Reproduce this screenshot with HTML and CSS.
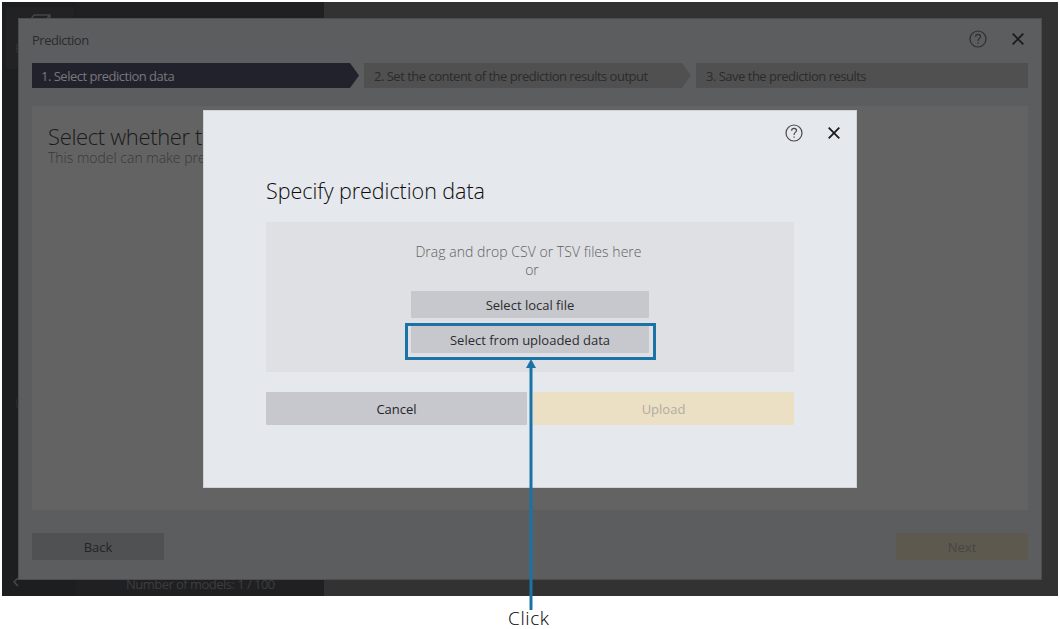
FILE: index.html
```html
<!DOCTYPE html>
<html lang="en">
<head>
<meta charset="utf-8">
<title>Prediction</title>
<link rel="stylesheet" href="styles.css">
</head>
<body>
<div class="figure">
  <div class="app">
    <aside class="rail">
      <div class="rail-item">
        <svg class="cube" width="28" height="24" viewBox="0 0 28 24"><path d="M1 9 7 1h16v14l-5 8H1zM1 9h15l7-8M16 9v14"/></svg>
        <span class="rail-label">P</span>
      </div>
      <span class="rail-user">U</span>
      <svg class="chevron" width="8" height="10" viewBox="0 0 8 10"><path d="M6 1 2 5l4 4"/></svg>
    </aside>
    <div class="models"><span class="model-count">Number of models: 1 / 100</span></div>
    <div class="workspace"></div>
  </div>

  <section class="wizard">
    <header class="wizard-head">
      <span class="wizard-title">Prediction</span>
      <div class="tools">
        <svg class="help" width="18" height="18" viewBox="0 0 18 18"><circle cx="9" cy="9" r="8"/><path d="M6.5 6.6C6.7 5 7.7 4.4 9 4.4c1.4 0 2.5.8 2.5 2.1 0 1.8-2.4 2-2.4 4v.5M9.1 12.4v1.4"/></svg>
        <svg class="close" width="12" height="12" viewBox="0 0 12 12"><path d="m.7.7 10.6 10.6M11.3.7.7 11.3"/></svg>
      </div>
    </header>
    <nav class="steps">
      <div class="step step-arrow active"><span>1. Select prediction data</span></div>
      <div class="step step-arrow"><span>2. Set the content of the prediction results output</span></div>
      <div class="step"><span>3. Save the prediction results</span></div>
    </nav>
    <div class="content">
      <div class="content-title">Select whether t</div>
      <div class="content-sub">This model can make pre</div>
    </div>
    <footer class="wizard-foot">
      <div class="btn back"><span>Back</span></div>
      <div class="btn next"><span>Next</span></div>
    </footer>
  </section>

  <section class="modal">
    <header class="tools modal-tools">
      <svg class="help" width="18" height="18" viewBox="0 0 18 18"><circle cx="9" cy="9" r="8"/><path d="M6.5 6.6C6.7 5 7.7 4.4 9 4.4c1.4 0 2.5.8 2.5 2.1 0 1.8-2.4 2-2.4 4v.5M9.1 12.4v1.4"/></svg>
      <svg class="close" width="12" height="12" viewBox="0 0 12 12"><path d="m.7.7 10.6 10.6M11.3.7.7 11.3"/></svg>
    </header>
    <h1 class="modal-title">Specify prediction data</h1>
    <div class="dropzone">
      <div class="drop-text">Drag and drop CSV or TSV files here</div>
      <div class="drop-or">or</div>
      <div class="btn pick"><span>Select local file</span></div>
      <div class="btn pick"><span>Select from uploaded data</span></div>
    </div>
    <footer class="modal-foot">
      <div class="btn cancel"><span>Cancel</span></div>
      <div class="btn upload"><span>Upload</span></div>
    </footer>
  </section>

  <div class="highlight"></div>
  <svg class="arrow" width="12" height="251" viewBox="0 0 12 251"><path d="M6 4v247"/><path class="tip" d="M6 0l5 9H1z"/></svg>
  <div class="caption">Click</div>
</div>
</body>
</html>
```
FILE: styles.css
```css
* { box-sizing: border-box; }
body { margin: 0; background: #fff; font-family: "Open Sans", "Noto Sans", sans-serif; font-weight: 300; font-size: 13px; }
.figure { position: relative; width: 1060px; height: 629px; overflow: hidden; padding: 2px 2px 0; }
svg { display: block; fill: none; flex: none; }
span, .content-title, .content-sub, .drop-text, .drop-or, .modal-title, .caption { white-space: nowrap; }

.app { display: flex; height: 594px; }
.rail { width: 74px; background: #1d1e1f; padding: 5px 0 9px 4px; display: flex; flex-direction: column; }
.rail-item { width: 68px; height: 62px; background: #222224; padding: 7px 10px; color: #3a3a3b; overflow: hidden; }
.cube { margin-left: 11px; stroke: #464647; stroke-width: 1.5; }
.rail-label { display: block; margin: 1px 0 0 -1px; line-height: 18px; }
.rail-user { margin: 325px 0 auto 9px; color: #343536; line-height: 18px; }
.chevron { margin-left: 6px; stroke: #4a4b4d; stroke-width: 1.3; }
.models { width: 248px; background: #202022; padding: 0 0 2px 50px; display: flex; align-items: flex-end; }
.model-count { color: #3d3d3e; line-height: 20px; font-weight: 400; letter-spacing: -.53px; }
.workspace { flex: 1; background: #323232; }

.wizard { position: absolute; left: 18px; top: 18px; width: 1024px; height: 562px; background: #5c5d5f; border: 1px solid #4c4d4e; padding: 11px 13px; display: flex; flex-direction: column; color: #282828; }
.wizard-head { height: 33px; display: flex; justify-content: space-between; }
.wizard-title { line-height: 20px; color: #2c2c2c; font-weight: 400; letter-spacing: -.5px; }
.tools { display: flex; }
.wizard .tools { gap: 25px; padding-right: 4px; }
.help { stroke: #2e2e2e; stroke-width: 1.2; }
.close { stroke: #1b1b1b; stroke-width: 1.8; margin-top: 3px; }
.steps { display: grid; grid-template: 25px / 327px 327px 332px; gap: 5px; }
.step { background: #505051; padding-left: 10px; line-height: 26px; font-weight: 400; color: #2b2b2c; letter-spacing: -.5px; }
.step-arrow { clip-path: polygon(0 0, 318px 0, 100% 50%, 318px 100%, 0 100%); }
.step.active { background: #22222c; color: #77777c; padding-left: 9px; }
.content { height: 404px; margin-top: 18px; background: #636363; padding: 18px 16px; overflow: hidden; }
.content-title { font-size: 22px; line-height: 25px; color: #1a1a1a; letter-spacing: -.35px; }
.content-sub { font-size: 14px; line-height: 18px; color: #383838; }
.wizard-foot { margin-top: 23px; display: flex; justify-content: space-between; }
.btn { display: flex; align-items: center; justify-content: center; border-radius: 1px; font-weight: 400; }
.back, .next { width: 132px; height: 27px; padding-top: 1px; }
.back { background: #505152; color: #242424; }
.next { background: #5d594e; color: #464644; }

.modal { position: absolute; left: 203px; top: 110px; width: 654px; height: 378px; background: #e5e8ed; border: 1px solid #cfd1d5; padding: 13px 62px 0; color: #242426; }
.modal-tools { justify-content: flex-end; gap: 25px; height: 52px; margin-right: -46px; }
.modal-tools .help { stroke: #48494b; }
.modal-title { margin: 0; font-size: 21.5px; font-weight: 300; line-height: 30px; height: 46px; color: #0c0c0c; letter-spacing: -.04px; }
.dropzone { height: 150px; background: #dfe0e4; padding-top: 21px; display: flex; flex-direction: column; align-items: center; color: #5e5f62; font-size: 14px; }
.drop-text, .drop-or { line-height: 18px; height: 18px; }
.drop-text { margin-left: -3px; letter-spacing: .04px; }
.drop-or { margin: 0 0 12px 4px; }
.pick { width: 238px; height: 27px; margin-bottom: 8px; background: #c7c8cd; color: #2c2c2e; font-size: 13px; padding-top: 1px; }
.modal-foot { margin-top: 20px; display: grid; grid-template-columns: 261px 261px; justify-content: space-between; }
.modal-foot .btn { height: 33px; padding-top: 1px; }
.cancel { background: #c7c8cd; }
.upload { background: #ebdfc4; color: #b0ada5; }

.highlight { position: absolute; left: 405px; top: 323px; width: 251px; height: 37px; border: 3px solid #1b72a6; }
.arrow { position: absolute; left: 525px; top: 359px; stroke: #1b72a6; stroke-width: 3; }
.tip { fill: #1b72a6; stroke: none; }
.caption { position: absolute; left: 508px; top: 608px; font-size: 19px; line-height: 21px; letter-spacing: .6px; color: #000; }
```
